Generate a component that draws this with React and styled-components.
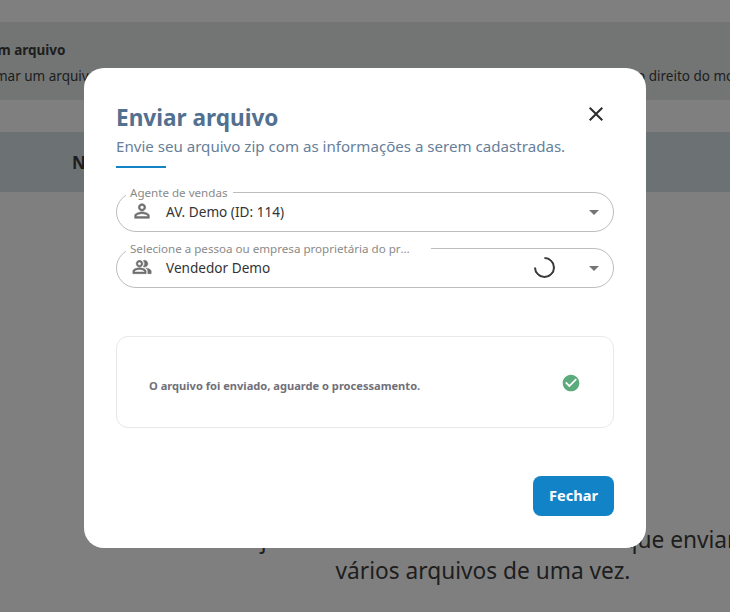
import React from 'react';
import styled, { createGlobalStyle } from 'styled-components';
import {
  MdArrowDropDown,
  MdCheckCircle,
  MdClose,
  MdOutlinePeopleAlt,
  MdPersonOutline,
} from 'react-icons/md';

const GlobalStyle = createGlobalStyle`
  html, body {
    margin: 0;
    padding: 0;
    height: 100%;
    overflow: hidden;
    background: #fff;
    font-family: "Noto Sans", "Open Sans", sans-serif;
  }
  * { box-sizing: border-box; }
`;

const Page = styled.div`
  height: 612px;
  overflow: hidden;
  padding-top: 22px;
  color: #3d3d3d;
`;

const Notice = styled.section`
  height: 78px;
  background: #e6eaea;
  padding-top: 19px;
  margin-bottom: 32px;
  white-space: nowrap;
  overflow: hidden;
`;

const NoticeTitle = styled.div`
  font-size: 13.5px;
  font-weight: 700;
  line-height: 19px;
  margin-left: -57px;
`;

const NoticeText = styled.div`
  font-size: 13.5px;
  line-height: 19px;
  margin-top: 7px;
  margin-left: -62px;
`;

const TableHead = styled.div`
  height: 60px;
  background: #d9e4e8;
  padding-left: 72px;
  display: flex;
  align-items: center;
  font-size: 17px;
  font-weight: 700;
`;

const Hint = styled.p`
  margin: 332px 0 0 -17px;
  width: 1000px;
  font-size: 22.7px;
  line-height: 31px;
  text-align: center;
  white-space: nowrap;
`;

const Overlay = styled.div`
  position: fixed;
  inset: 0;
  background: rgba(0, 0, 0, 0.5);
  display: flex;
  justify-content: center;
  align-items: flex-start;
  padding-top: 68px;
`;

const Modal = styled.div`
  width: 562px;
  height: 480px;
  background: #fff;
  border-radius: 20px;
  padding: 32px;
  display: flex;
  flex-direction: column;
`;

const Header = styled.header`
  display: flex;
  justify-content: space-between;
  align-items: flex-start;
`;

const Title = styled.h2`
  margin: 0;
  font-size: 22.6px;
  line-height: 36px;
  font-weight: 700;
  color: #52708f;
`;

const CloseButton = styled.button`
  border: 0;
  background: none;
  padding: 0;
  margin: 2px 6px 0 0;
  width: 24px;
  height: 24px;
  color: #2b2b2b;
  cursor: pointer;
  svg { display: block; }
`;

const Subtitle = styled.p`
  margin: 0 0 1px;
  font-size: 15.1px;
  line-height: 21px;
  color: #66809a;
`;

const Accent = styled.div`
  width: 50px;
  height: 2px;
  margin-top: 8px;
  background: #1483c5;
`;

const Fields = styled.div`
  display: flex;
  flex-direction: column;
  gap: 16px;
  margin-top: 24px;
`;

const Field = styled.div`
  position: relative;
  height: 40px;
  border: 1px solid #bdbdbd;
  border-radius: 20px;
  padding: 0 7px 2px 14px;
  display: flex;
  align-items: center;
`;

const FieldLabel = styled.label`
  position: absolute;
  top: -8px;
  left: 9px;
  width: ${({ $notch }) => $notch}px;
  padding: 0 4px;
  background: #fff;
  font-size: 11.6px;
  line-height: 16px;
  color: #8a8a8a;
  white-space: nowrap;
`;

const LabelText = styled.span`
  display: block;
  max-width: 285px;
  overflow: hidden;
  text-overflow: ellipsis;
`;

const FieldIcon = styled.span`
  display: flex;
  justify-content: center;
  width: 22px;
  margin-right: 13px;
  color: #6e6e6e;
  svg path:not([fill='none']) {
    stroke: currentColor;
    stroke-width: 0.6;
  }
`;

const FieldValue = styled.span`
  flex: 1;
  font-size: 13.6px;
  color: #333;
`;

const Spinner = styled.span`
  width: 21px;
  height: 21px;
  margin-right: 27px;
  border: 2px solid #3a3a3a;
  border-left-color: transparent;
  border-radius: 50%;
  transform: rotate(45deg);
`;

const Caret = styled.span`
  display: flex;
  margin-top: 2px;
  color: #757575;
`;

const UploadBox = styled.div`
  height: 92px;
  margin-top: 48px;
  border: 1px solid #e8e8e8;
  border-radius: 12px;
  padding: 0 32px;
  display: flex;
  align-items: center;
  justify-content: space-between;
`;

const UploadText = styled.span`
  font-size: 11.1px;
  font-weight: 700;
  color: #70707a;
  margin-top: 6px;
`;

const UploadCheck = styled.span`
  display: flex;
  color: #5bab7d;
  margin: 2px 0 0 0;
`;

const Footer = styled.footer`
  margin-top: auto;
  display: flex;
  justify-content: flex-end;
`;

const PrimaryButton = styled.button`
  width: 81px;
  height: 40px;
  border: 0;
  border-radius: 8px;
  padding: 0 0 2px;
  background: #1283c6;
  color: #fff;
  font-family: inherit;
  font-size: 14.6px;
  font-weight: 700;
  cursor: pointer;
`;

export default function App() {
  return (
    <>
      <GlobalStyle />
      <Page>
        <Notice>
          <NoticeTitle>Enviar um arquivo</NoticeTitle>
          <NoticeText>
            Ao confirmar um arquivo você declara que possui todos os direitos sobre todo este conteúdo salvo, reservado o direito do modelo
          </NoticeText>
        </Notice>
        <TableHead>Nome</TableHead>
        <Hint>
          Se já tem tudo isso use este molde o que enviar
          <br />
          vários arquivos de uma vez.
        </Hint>
      </Page>
      <Overlay>
        <Modal>
          <Header>
            <Title>Enviar arquivo</Title>
            <CloseButton aria-label="Fechar">
              <MdClose size={24} />
            </CloseButton>
          </Header>
          <Subtitle>Envie seu arquivo zip com as informações a serem cadastradas.</Subtitle>
          <Accent />
          <Fields>
            <Field>
              <FieldLabel $notch={107}>Agente de vendas</FieldLabel>
              <FieldIcon><MdPersonOutline size={22} /></FieldIcon>
              <FieldValue>AV. Demo (ID: 114)</FieldValue>
              <Caret><MdArrowDropDown size={24} /></Caret>
            </Field>
            <Field>
              <FieldLabel $notch={305}>
                <LabelText>Selecione a pessoa ou empresa proprietária do produto</LabelText>
              </FieldLabel>
              <FieldIcon><MdOutlinePeopleAlt size={20} /></FieldIcon>
              <FieldValue>Vendedor Demo</FieldValue>
              <Spinner />
              <Caret><MdArrowDropDown size={24} /></Caret>
            </Field>
          </Fields>
          <UploadBox>
            <UploadText>O arquivo foi enviado, aguarde o processamento.</UploadText>
            <UploadCheck><MdCheckCircle size={20} /></UploadCheck>
          </UploadBox>
          <Footer>
            <PrimaryButton>Fechar</PrimaryButton>
          </Footer>
        </Modal>
      </Overlay>
    </>
  );
}
